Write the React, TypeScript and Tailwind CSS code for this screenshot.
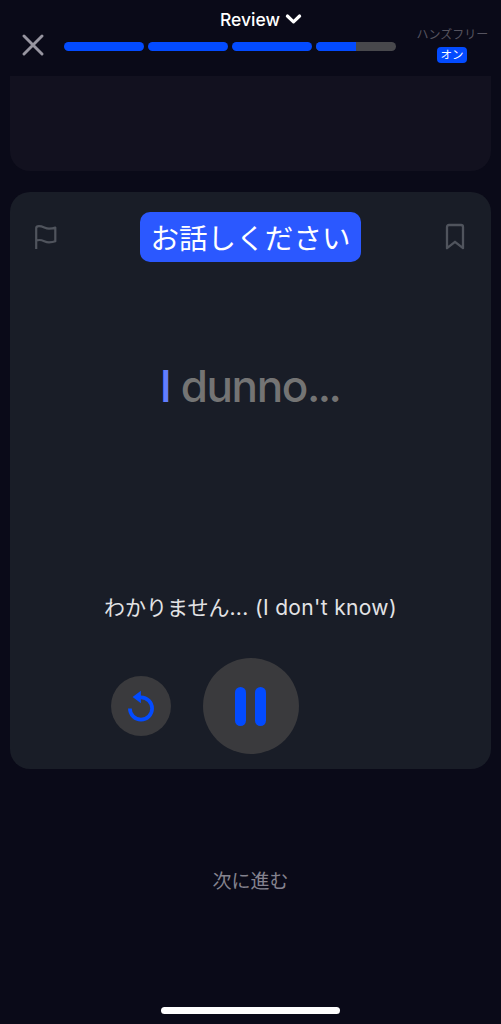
import type { ReactNode } from 'react';

const segments = [100, 100, 100, 50];

function CloseIcon() {
  return (
    <svg width="22" height="22" viewBox="0 0 22 22" fill="none" stroke="#9795a0" strokeWidth="2.9" strokeLinecap="round">
      <path d="M2 2 20 20M20 2 2 20" />
    </svg>
  );
}

function ChevronIcon() {
  return (
    <svg width="17" height="12" viewBox="0 0 17 12" fill="none" stroke="#fff" strokeWidth="3.2" strokeLinecap="round" strokeLinejoin="round">
      <path d="M2.4 3 8.5 8.8 14.6 3" />
    </svg>
  );
}

function FlagIcon() {
  return (
    <svg width="24" height="26" viewBox="0 0 24 26" fill="none" stroke="#50545d" strokeWidth="2.2" strokeLinejoin="round">
      <path d="M3.200 25V4.200C3.200 2.500 4.300 2.200 6 2.200C10.500 2.200 12 4.600 16 4.600C18.500 4.600 20.500 4.300 22.300 3.600V17.300C20.500 18 18.500 18.300 16 18.300C12 18.300 10.500 16 6.500 16C5 16 4 16.200 3.200 16.600" />
    </svg>
  );
}

function BookmarkIcon() {
  return (
    <svg width="20" height="28" viewBox="0 0 20 28" fill="none" stroke="#50545d" strokeWidth="2.3" strokeLinejoin="round">
      <path d="M2 25.200V4C2 2.700 2.700 2 4 2H16C17.300 2 18 2.700 18 4V25.200L10 18.800Z" />
    </svg>
  );
}

function ReplayIcon() {
  return (
    <svg width="28" height="32" viewBox="0 0 28 32" fill="none">
      <path d="M2.900 18.500A11.100 11.100 0 1 0 14 7.400H12" stroke="#034bff" strokeWidth="3.700" />
      <path d="M5.600 7 13.900 0.800V13.200Z" fill="#034bff" />
    </svg>
  );
}

function RoundButton({ label, className, children }: { label: string; className: string; children: ReactNode }) {
  return (
    <button aria-label={label} className={`flex shrink-0 items-center justify-center rounded-full bg-[#3a3a3d] ${className}`}>
      {children}
    </button>
  );
}

export default function App() {
  return (
    <div className="flex h-[1024px] w-[501px] flex-col overflow-hidden bg-[#0a0a18] font-['Inter','Noto_Sans_CJK_JP',sans-serif]">
      <header className="flex h-[76px] shrink-0 flex-col">
        <div className="flex h-[27px] justify-center gap-[5px] pt-2 pl-[21px]">
          <span className="text-[17.5px] leading-[23px] font-medium text-white">Review</span>
          <span className="pt-[5px]"><ChevronIcon /></span>
        </div>
        <div className="flex">
          <button aria-label="Close" className="mt-[7px] h-[22px] w-16 shrink-0 pl-[22px]"><CloseIcon /></button>
          <div className="mt-[15px] flex w-[332px] shrink-0 gap-1">
            {segments.map((value, i) => (
              <div key={i} className="h-[9px] flex-1 overflow-hidden rounded-full bg-[#48484c]">
                <div className="h-full bg-[#034bff]" style={{ width: `${value}%` }} />
              </div>
            ))}
          </div>
          <div className="flex flex-1 flex-col items-center pl-[7px]">
            <span className="h-5 pl-px text-[12px] leading-[16px] whitespace-nowrap text-[#55535f]">ハンズフリー</span>
            <span className="flex h-[16px] w-[30px] items-center justify-center rounded-[4px] bg-[#034bff] pt-[2px] text-[11.5px] leading-none text-white">オン</span>
          </div>
        </div>
      </header>

      <div className="mx-2.5 h-[95px] shrink-0 rounded-b-[20px] bg-[#12111f]" />

      <main className="mx-2.5 mt-[21px] flex h-[577px] shrink-0 flex-col items-center rounded-[20px] bg-[#191d27]">
        <div className="flex w-full items-center justify-between pt-5 pr-[26px] pl-[23px]">
          <FlagIcon />
          <div className="-ml-px flex h-[50px] w-[221px] items-center justify-center rounded-[10px] bg-[#2b58ff] pt-[3px] text-[28.5px] leading-[40px] font-normal tracking-[0.1px] whitespace-nowrap text-white">
            お話しください
          </div>
          <BookmarkIcon />
        </div>
        <p className="mt-[96px] h-[56px] pr-[2px] text-[44px] leading-[56px] font-medium tracking-[-1.4px] whitespace-nowrap text-[#747474]">
          <span className="text-[#627dff]">I</span> dunno<span className="tracking-[-2.6px]">...</span>
        </p>
        <p className="mt-[178px] h-[30px] text-[21px] leading-[32px] whitespace-nowrap text-[#e3e3e5]">
          わかりません<span className="tracking-[0.35px]">... (I don't know)</span>
        </p>
        <div className="mt-9 flex w-full items-center gap-8 pl-[101px]">
          <RoundButton label="Replay" className="h-[60px] w-[60px]"><ReplayIcon /></RoundButton>
          <RoundButton label="Pause" className="h-24 w-24 gap-[9px] pr-px">
            <span className="h-[39px] w-[11px] rounded-full bg-[#034bff]" />
            <span className="h-[39px] w-[11px] rounded-full bg-[#034bff]" />
          </RoundButton>
        </div>
      </main>

      <button className="mt-[98px] h-[30px] shrink-0 text-[19px] leading-[30px] text-[#85838f]">次に進む</button>
      <div className="mx-auto mt-[110px] h-[7px] w-[179px] shrink-0 rounded-full bg-white" />
    </div>
  );
}
